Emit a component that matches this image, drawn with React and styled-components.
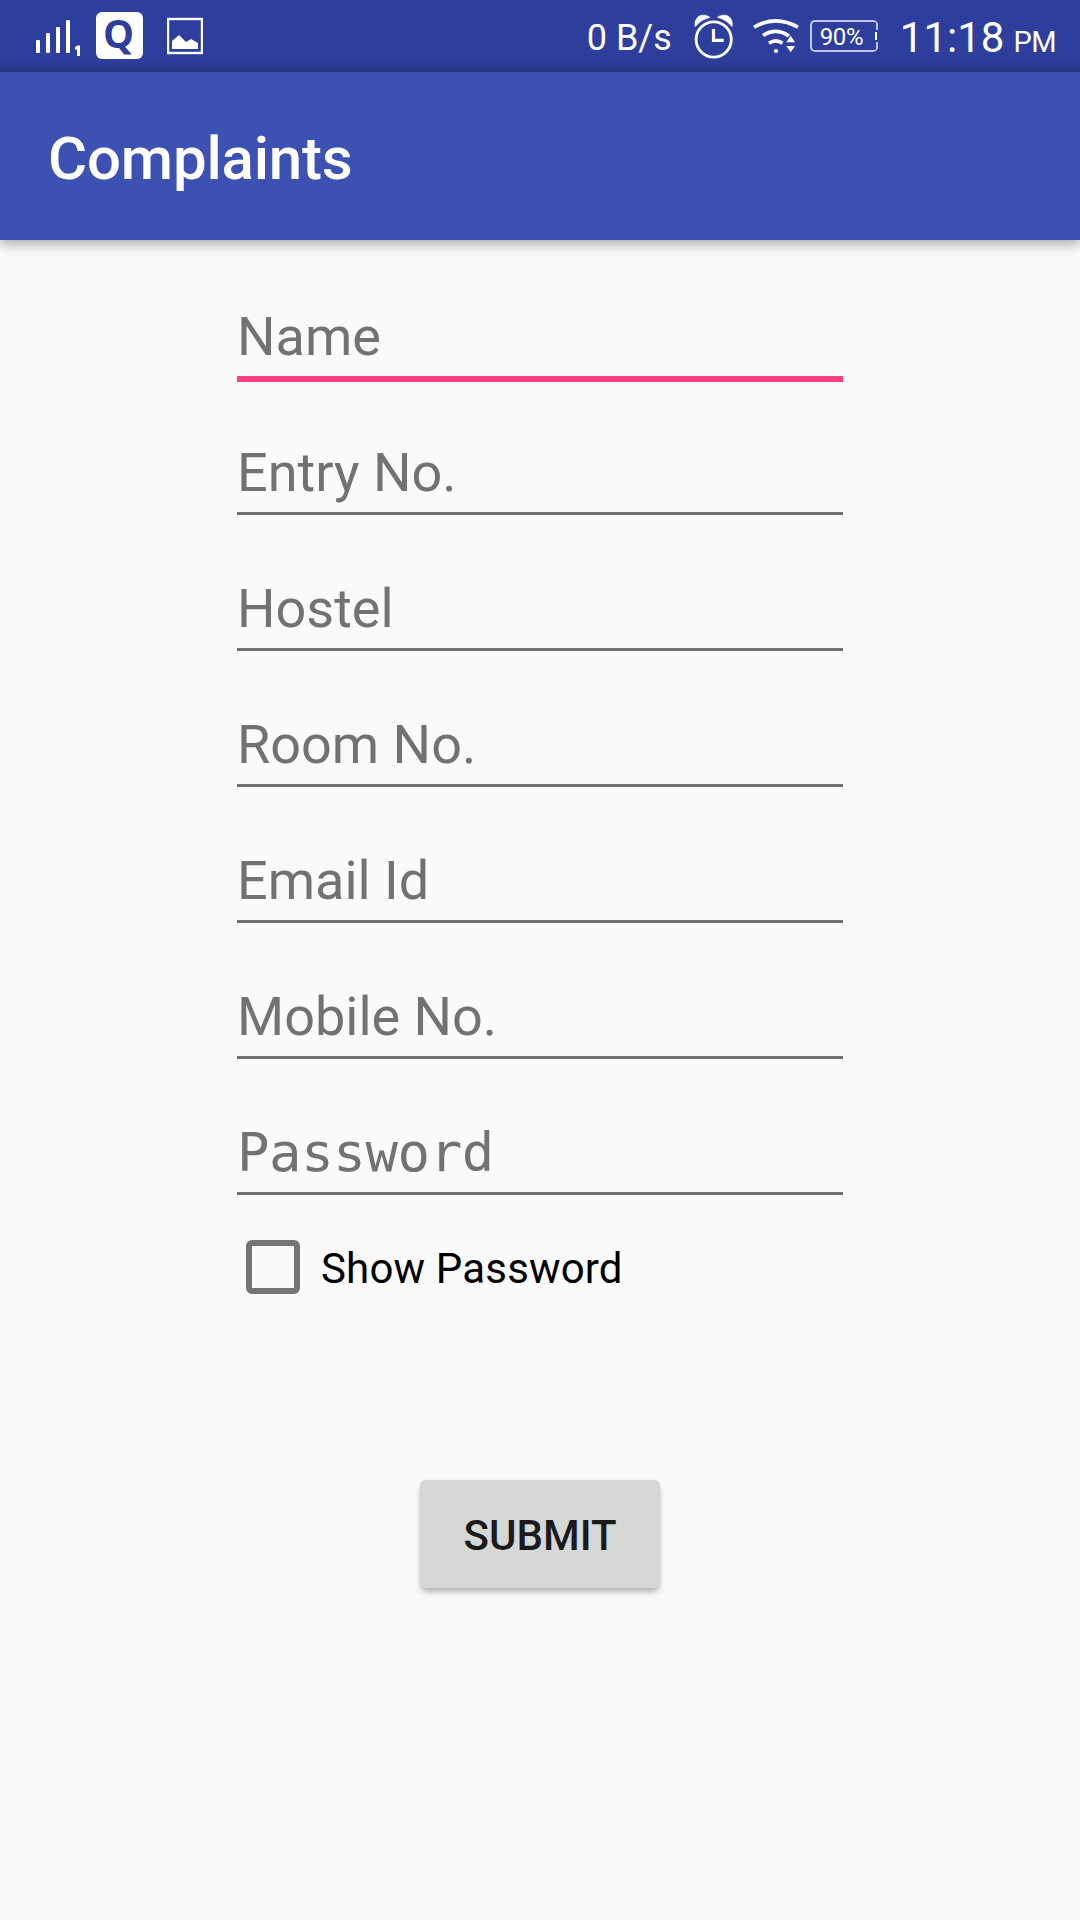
import React, { useState } from "react";
import styled, { createGlobalStyle } from "styled-components";

const GlobalStyle = createGlobalStyle`
  *, *::before, *::after { box-sizing: border-box; }
  body { margin: 0; background: #fafafa; }
`;

const Screen = styled.div`
  width: 1080px;
  height: 1920px;
  display: flex;
  flex-direction: column;
  overflow: hidden;
  background: #fafafa;
  font-family: Roboto, "Liberation Sans", sans-serif;
  color: #000;
`;

const StatusBar = styled.header`
  display: flex;
  justify-content: space-between;
  height: 72px;
  flex: none;
  padding: 0 24px 0 36px;
  color: #fff;
  background: linear-gradient(to bottom, #2e3e9c 0, #2e3e9c 60px, #293684 72px);
`;

const StatusGroup = styled.div`
  display: flex;
  align-items: flex-start;
`;

const StatusIcon = styled.svg`
  display: block;
  flex: none;
  margin-left: ${(p) => p.$gap || 0}px;
`;

const StatusText = styled.span`
  font-size: ${(p) => p.$size}px;
  line-height: 40px;
  margin-top: ${(p) => p.$top}px;
  margin-left: ${(p) => p.$gap || 0}px;
  letter-spacing: ${(p) => p.$spacing || 0}px;
  white-space: nowrap;
`;

const Badge = styled.span`
  width: 47px;
  height: 47px;
  margin: 12px 0 0 15px;
  padding-right: 2px;
  border-radius: 6px;
  background: #fff;
  color: #2e3e9c;
  font: 700 39px/42px "Open Sans", sans-serif;
  text-align: center;
`;

const Battery = styled.span`
  display: flex;
  justify-content: space-between;
  align-items: center;
  width: 68px;
  height: 32px;
  margin: 20px 0 0 11px;
  padding-left: 8px;
  border: 2px solid #bfc5ec;
  border-right: 0;
  border-radius: 5px;
  font-size: 24px;
  letter-spacing: -0.4px;
`;

const BatteryLevel = styled.span`
  line-height: 28px;
  padding-top: 2px;
`;

const AppBar = styled.div`
  position: relative;
  display: flex;
  align-items: center;
  flex: none;
  height: 168px;
  padding: 6px 48px 0;
  background: #3d51b3;
  box-shadow: 0 4px 12px rgba(0, 0, 0, 0.34);
  clip-path: inset(0 0 -30px 0);
`;

const Title = styled.h1`
  margin: 0;
  color: #fff;
  font-size: 60px;
  font-weight: 500;
  line-height: 70px;
  letter-spacing: -0.2px;
`;

const Form = styled.form`
  display: flex;
  flex-direction: column;
  width: 606px;
  margin: 6px auto 0;
`;

const Field = styled.label`
  display: flex;
  flex-direction: column;
  justify-content: flex-end;
  height: 136px;
`;

const Hint = styled.span`
  height: 71px;
  color: #727272;
  font-size: 54px;
  line-height: 64px;
`;

const MonoHint = styled(Hint)`
  line-height: 64px;
  letter-spacing: -0.4px;
  font-family: "DejaVu Sans Mono", monospace;
`;

const Underline = styled.span`
  height: 6px;
  border-top: ${(p) => (p.$active ? "6px solid #ff4081" : "3px solid #727272")};
`;

const CheckRow = styled.label`
  display: flex;
  align-items: center;
  gap: 21px;
  margin: 42px 0 0 9px;
  height: 54px;
`;

const Box = styled.span`
  width: 54px;
  height: 54px;
  border: 6px solid #757575;
  border-radius: 6px;
`;

const CheckLabel = styled.span`
  font-size: 42px;
  line-height: 50px;
  padding-top: 3px;
  letter-spacing: 0.17px;
`;

const Submit = styled.button`
  align-self: center;
  width: 240px;
  height: 108px;
  margin-top: 186px;
  padding: 3px 0 0;
  border: 0;
  border-radius: 6px;
  background: #d6d8d7;
  color: #1b1b1b;
  font: 500 42px/50px Roboto, "Liberation Sans", sans-serif;
  box-shadow: 0 5px 6px -1px rgba(0, 0, 0, 0.27), 0 0 3px rgba(0, 0, 0, 0.06);
`;

const FIELDS = ["Name", "Entry No.", "Hostel", "Room No.", "Email Id", "Mobile No.", "Password"];

export default function App() {
  const [active, setActive] = useState("Name");
  return (
    <Screen>
      <GlobalStyle />
      <StatusBar>
        <StatusGroup>
          <StatusIcon width="45" height="72" viewBox="36 0 45 72" fill="#fff">
            <rect x="36" y="40" width="4" height="13" rx="1" />
            <rect x="46" y="33" width="4" height="20" rx="1" />
            <rect x="56" y="27" width="4" height="26" rx="1" />
            <rect x="66" y="20" width="4" height="33" rx="1" />
            <path d="M77.2 45.5h2.8V56h-3v-6.5h-2v-2.2z" />
          </StatusIcon>
          <Badge>Q</Badge>
          <StatusIcon $gap={24} width="36" height="72" viewBox="167 0 36 72" fill="#fff">
            <rect x="168" y="19" width="34" height="34" fill="none" stroke="#fff" strokeWidth="2.4" />
            <path d="M172 49V41l7-6 7 7 5-3 7 4v6z" />
          </StatusIcon>
        </StatusGroup>
        <StatusGroup>
          <StatusText $size={36} $top={18}>0 B/s</StatusText>
          <StatusIcon $gap={22} width="40" height="72" viewBox="694 0 40 72" fill="none" stroke="#fff">
            <circle cx="713.7" cy="39.5" r="17.6" strokeWidth="2.8" />
            <path d="M713.5 29v11.3h10.2" strokeWidth="3.2" />
            <path d="M695.3 26.5C693.5 17 702 12 709.8 17.3Q701 19.5 695.3 26.5zM732 26.5C733.8 17 725.3 12 717.5 17.3Q726.300 19.5 732 26.5z" fill="#fff" strokeWidth="0.8" />
          </StatusIcon>
          <StatusIcon $gap={18} width="47" height="72" viewBox="752 0 47 72" fill="none" stroke="#fff" strokeWidth="3.6">
            <path d="M754 27.2Q776 14.5 798 27.2" />
            <path d="M763 35.5Q776 27 789 36" />
            <path d="M769 43.3Q776 38.5 782.5 43.3" />
            <circle cx="776" cy="51" r="2.1" fill="#fff" stroke="none" />
            <path d="M786.3 42.2l4.4-6.5 4.4 6.500zM786.3 46l4.4 6.2 4.4-6.2z" fill="#fff" stroke="none" />
          </StatusIcon>
          <Battery>
            <BatteryLevel>90%</BatteryLevel>
            <StatusIcon width="3" height="32" viewBox="0 0 3 32" fill="#bfc5ec">
              <rect x="1" y="3" width="2" height="7" />
              <rect x="0" y="12" width="2" height="8" fill="#fff" />
              <rect x="1" y="22" width="2" height="7" />
            </StatusIcon>
          </Battery>
          <StatusText $size={42} $top={18} $gap={22}>11:18</StatusText>
          <StatusText $size={29} $top={22} $gap={9} $spacing={-0.5}>PM</StatusText>
        </StatusGroup>
      </StatusBar>
      <AppBar>
        <Title>Complaints</Title>
      </AppBar>
      <Form onSubmit={(e) => e.preventDefault()}>
        {FIELDS.map((name) => (
          <Field key={name} onClick={() => setActive(name)}>
            {name === "Password" ? <MonoHint>{name}</MonoHint> : <Hint>{name}</Hint>}
            <Underline $active={active === name} />
          </Field>
        ))}
        <CheckRow>
          <Box />
          <CheckLabel>Show Password</CheckLabel>
        </CheckRow>
        <Submit type="submit">SUBMIT</Submit>
      </Form>
    </Screen>
  );
}
